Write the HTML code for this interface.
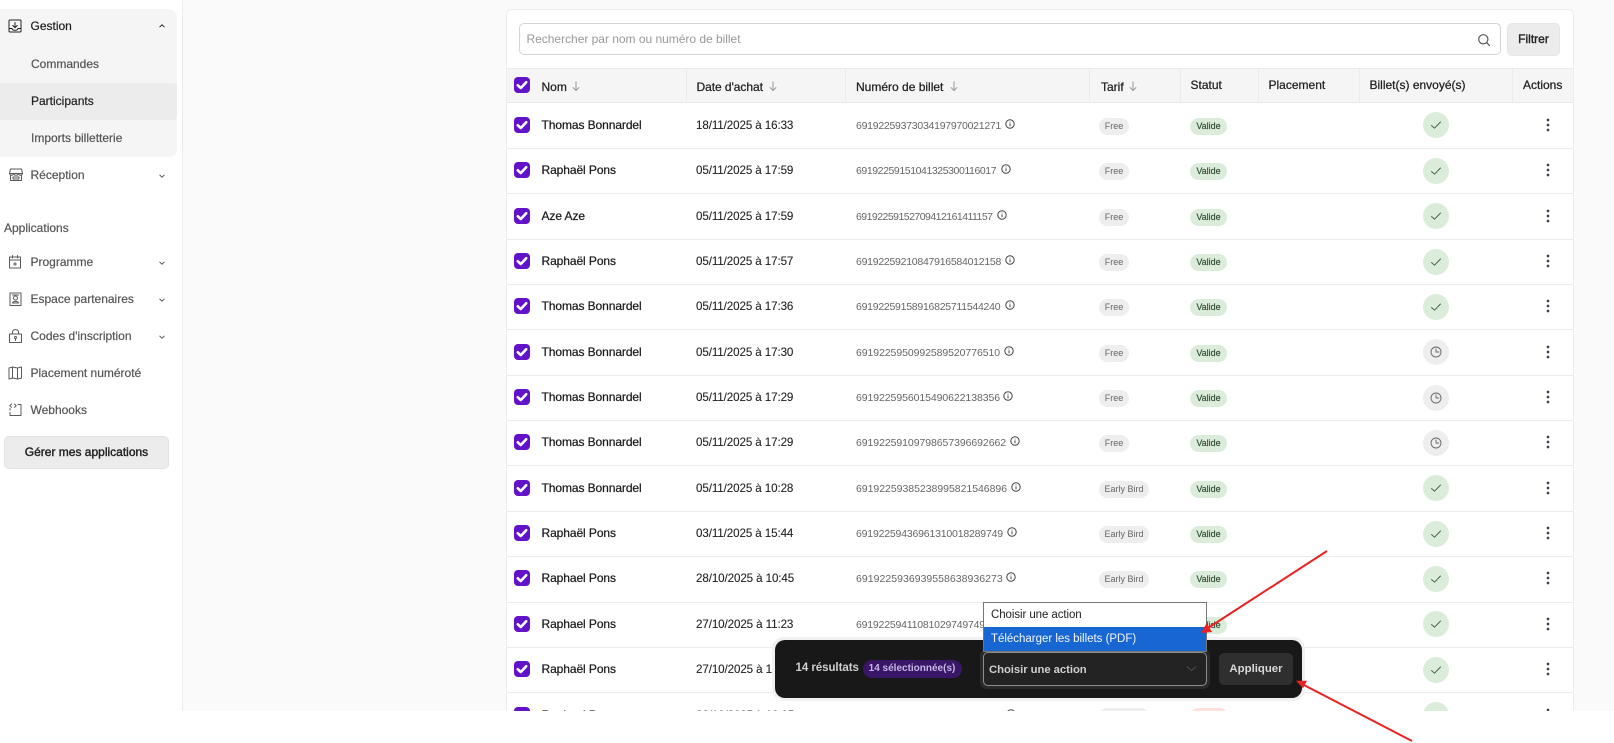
<!DOCTYPE html>
<html lang="fr"><head><meta charset="utf-8"><title>Participants</title>
<style>
*{box-sizing:border-box}
html,body{margin:0;padding:0;background:#fff}
body{width:1614px;height:743px;position:relative;overflow:hidden;font-family:"Liberation Sans",sans-serif;font-size:12px;color:#1c1c1c}
.a{position:absolute;white-space:nowrap}
#app{position:absolute;left:0;top:0;width:1614px;height:711px;overflow:hidden;background:#fafafa}
#side{position:absolute;left:0;top:0;width:183px;height:711px;background:#fff;border-right:1px solid #ececec}
.s{position:absolute;white-space:nowrap;line-height:16px;height:16px;color:#555;font-size:12px;-webkit-text-stroke:.2px currentColor}
.ic{position:absolute;width:16px;height:16px;fill:none;stroke:#5a5a5a;stroke-width:1;stroke-linecap:round;stroke-linejoin:round}
.ch{position:absolute;left:158px;width:8px;height:6px;fill:none;stroke:#555;stroke-width:1}
#card{position:absolute;left:506px;top:9px;width:1068px;height:760px;background:#fff;border:1px solid #ececec;border-radius:6px}
.h{position:absolute;top:0;height:34px;line-height:34px;white-space:nowrap;font-size:12px;color:#222;-webkit-text-stroke:.25px #222}
.v{position:absolute;top:0;width:1px;height:34px;background:#ebebeb}
.ar{position:absolute;width:10px;height:12px;fill:none;stroke:#999;stroke-width:1;top:11px}
.r{position:absolute;left:507px;width:1066px;height:45.35px;background:#fff;border-bottom:1px solid #ebebeb}
.cb{position:absolute;left:7px;top:13.3px;width:16px;height:16px;border-radius:4px;background:#6213c9}
.cb svg{position:absolute;left:0;top:0;width:16px;height:16px}
.n,.d,.t{position:absolute;white-space:nowrap;top:13.3px;height:17px;line-height:17px}
.n{left:34.5px;font-size:12px;color:#1c1c1c;-webkit-text-stroke:.25px #1c1c1c;letter-spacing:-.08px}
.d{left:189px;font-size:11.6px;color:#222;letter-spacing:-.1px;-webkit-text-stroke:.1px #222}
.t{left:349px;top:14.3px;font-size:10.5px;color:#666}
.inf{position:absolute;top:15.3px;width:10px;height:10px;fill:none;stroke:#444;stroke-width:1}
.p{position:absolute;top:14.3px;height:17px;line-height:17px;border-radius:9px;font-size:9px;text-align:center;white-space:nowrap}
.f{left:592px;width:30px;background:#eee;color:#666}
.e{left:592px;width:50px;background:#eee;color:#666}
.o{left:683px;width:37px;background:#dcecdb;color:#2d4a32;-webkit-text-stroke:.15px #2d4a32}
.x{left:683px;width:38px;background:#ffe0dc;color:#7a2a20}
.c{position:absolute;left:916px;top:8.8px;width:26px;height:26px;border-radius:50%}
.c svg{position:absolute;left:5px;top:5px;width:16px;height:16px;fill:none;stroke-width:.9;stroke-linecap:round;stroke-linejoin:round}
.cg{background:#dcecdb}.cg svg{stroke:#3f5a45}
.cc{background:#eee}.cc svg{stroke:#666}
.m{position:absolute;left:1039px;top:14.3px;width:4px;height:14px}
.m svg{display:block;width:4px;height:14px;fill:#3c4450}
</style></head><body>
<svg width="0" height="0" style="position:absolute">
<symbol id="k" viewBox="0 0 16 16"><path d="M3.8 8.3 6.8 11 12.2 5.2" fill="none" stroke="#fff" stroke-width="2.6" stroke-linecap="round" stroke-linejoin="round"/></symbol>
<symbol id="i" viewBox="0 0 10 10"><circle cx="5" cy="5" r="4.2"/><path d="M5 4.4V7.2M5 2.6V3.4"/></symbol>
<symbol id="g" viewBox="0 0 16 16"><path d="M3.5 8.5 6.5 11.2 12.5 5"/></symbol>
<symbol id="o" viewBox="0 0 16 16"><circle cx="8" cy="8" r="5"/><path d="M8 5V8H10.8"/></symbol>
<symbol id="d" viewBox="0 0 4 14"><circle cx="2" cy="2" r="1.35"/><circle cx="2" cy="7" r="1.35"/><circle cx="2" cy="12" r="1.35"/></symbol>
<symbol id="a" viewBox="0 0 10 12"><path d="M5 1.5V10.5M1.8 7.3 5 10.5 8.2 7.3"/></symbol>
</svg>
<div id="app">
<div id="side">
<div style="position:absolute;left:0;top:9px;width:177px;height:148px;background:#f5f5f5;border-radius:0 8px 8px 0"></div>
<div style="position:absolute;left:0;top:83px;width:177px;height:37px;background:#ececec;border-radius:0 4px 4px 0"></div>
<svg class="ic" style="left:7px;top:18px;stroke:#222" viewBox="0 0 16 16"><rect x="2" y="2" width="12" height="12" rx="1"/><path d="M8 4.5V9.5M5.8 7.5 8 9.7 10.2 7.5M2 10.5H5C5.4 12 6.6 12.3 8 12.3S10.6 12 11 10.5H14"/></svg>
<div class="s" style="left:30.5px;top:18px;color:#222">Gestion</div>
<svg class="ch" style="top:23px;stroke:#222" viewBox="0 0 8 6"><path d="M1.5 4.2 4 1.8 6.5 4.2"/></svg>
<div class="s" style="left:31px;top:56px">Commandes</div>
<div class="s" style="left:31px;top:93px;color:#222">Participants</div>
<div class="s" style="left:31px;top:130px">Imports billetterie</div>
<svg class="ic" style="left:8px;top:167px" viewBox="0 0 16 16"><path d="M2.5 2H13.5L14.5 6.5H1.5ZM2.5 8V13.5H13.5V8M1.5 6.5C2 8.8 5 8.8 5.5 6.5 6 8.8 10 8.8 10.5 6.5 11 8.8 14 8.8 14.5 6.5"/><rect x="5" y="10" width="6" height="2"/></svg>
<div class="s" style="left:30.5px;top:167px">Réception</div>
<svg class="ch" style="top:173px" viewBox="0 0 8 6"><path d="M1.5 1.8 4 4.2 6.5 1.8"/></svg>
<div class="s" style="left:4px;top:220px">Applications</div>
<svg class="ic" style="left:7px;top:254px" viewBox="0 0 16 16"><rect x="2.5" y="3" width="11" height="11"/><path d="M2.5 6H13.5M5.5 1.5V4M10.5 1.5V4M6.5 10H9.5M8 8.5V11.5"/></svg>
<div class="s" style="left:30.5px;top:254px">Programme</div>
<svg class="ch" style="top:260px" viewBox="0 0 8 6"><path d="M1.5 1.8 4 4.2 6.5 1.8"/></svg>
<svg class="ic" style="left:7px;top:291px" viewBox="0 0 16 16"><rect x="3" y="2" width="11" height="12.5"/><circle cx="8.5" cy="7" r="2"/><path d="M5.5 12C6 9.8 11 9.8 11.5 12ZM5.5 4H11.5"/></svg>
<div class="s" style="left:30.5px;top:291px">Espace partenaires</div>
<svg class="ch" style="top:297px" viewBox="0 0 8 6"><path d="M1.5 1.8 4 4.2 6.5 1.8"/></svg>
<svg class="ic" style="left:7px;top:328px" viewBox="0 0 16 16"><rect x="2.5" y="6" width="12" height="8.5"/><path d="M5.5 6V4C5.5 .8 11.5 .8 11.5 4V6"/><circle cx="8.5" cy="9.5" r="1"/><path d="M8.5 10.5V12.5"/></svg>
<div class="s" style="left:30.5px;top:328px">Codes d'inscription</div>
<svg class="ch" style="top:334px" viewBox="0 0 8 6"><path d="M1.5 1.8 4 4.2 6.5 1.8"/></svg>
<svg class="ic" style="left:7px;top:365px" viewBox="0 0 16 16"><path d="M2 3 5.5 2 10.5 3 14.5 2V13L10.5 14 5.5 13 2 14ZM5.5 2V13M10.5 3V14"/></svg>
<div class="s" style="left:30.5px;top:365px">Placement numéroté</div>
<svg class="ic" style="left:7px;top:402px" viewBox="0 0 16 16"><path d="M11 2.5H14V13.5H3V10.5M3 6.5V8M4.5 2 2.8 3.7 4.5 5.4M7.5 2 9.2 3.7 7.5 5.4"/></svg>
<div class="s" style="left:30.5px;top:402px">Webhooks</div>
<div style="position:absolute;left:4px;top:436px;width:165px;height:33px;background:#ececec;border:1px solid #e2e2e2;border-radius:5px;text-align:center;line-height:31px;font-size:12px;color:#222;-webkit-text-stroke:.4px #222">Gérer mes applications</div>
</div>

<div id="card"></div>
<div class="a" style="left:519px;top:23px;width:982px;height:32px;border:1.5px solid #d4d4d4;border-radius:5px;background:#fff"></div>
<div class="a" style="left:526.5px;top:31px;line-height:17px;color:#999;font-size:12px;letter-spacing:-.02px">Rechercher par nom ou numéro de billet</div>
<svg class="a" style="left:1477px;top:33px;fill:none;stroke:#555;stroke-width:1.2;stroke-linecap:round" width="14" height="14" viewBox="0 0 14 14"><circle cx="6.3" cy="6.3" r="4.6"/><path d="M9.8 9.8 12.5 12.5"/></svg>
<div class="a" style="left:1507px;top:23px;width:53px;height:33px;background:#ececec;border:1px solid #e6e6e6;border-radius:5px;text-align:center;line-height:31px;font-size:12px;color:#222;-webkit-text-stroke:.4px #222">Filtrer</div>

<div class="a" style="left:507px;top:68px;width:1066px;height:35px;background:#f5f5f5;border-top:1px solid #ececec;border-bottom:1px solid #e8e8e8">
<div class="cb" style="top:8px"><svg><use href="#k"/></svg></div>
<div class="h" style="left:34.5px;top:1px">Nom</div><svg class="ar" style="left:63.5px"><use href="#a"/></svg>
<div class="v" style="left:179px"></div>
<div class="h" style="left:189.5px;top:1px;letter-spacing:-.05px">Date d'achat</div><svg class="ar" style="left:261px"><use href="#a"/></svg>
<div class="v" style="left:338px"></div>
<div class="h" style="left:349px;top:1px">Numéro de billet</div><svg class="ar" style="left:441.5px"><use href="#a"/></svg>
<div class="v" style="left:582px"></div>
<div class="h" style="left:594px;top:1px">Tarif</div><svg class="ar" style="left:621px"><use href="#a"/></svg>
<div class="v" style="left:673px"></div>
<div class="h" style="left:683.5px;top:-1px">Statut</div>
<div class="v" style="left:751px"></div>
<div class="h" style="left:761.5px;top:-1px">Placement</div>
<div class="v" style="left:852px"></div>
<div class="h" style="left:862.5px;top:-1px">Billet(s) envoyé(s)</div>
<div class="v" style="left:1005px"></div>
<div class="h" style="left:1016px;top:-1px">Actions</div>
</div>

<div class="r" style="top:103.7px"><div class="cb"><svg><use href="#k"/></svg></div><span class="n">Thomas Bonnardel</span><span class="d">18/11/2025 à 16:33</span><span class="t" style="letter-spacing:-.26px">69192259373034197970021271</span><svg class="inf" style="left:498px"><use href="#i"/></svg><span class="p f">Free</span><span class="p o">Valide</span><span class="c cg"><svg><use href="#g"/></svg></span><span class="m"><svg><use href="#d"/></svg></span></div>
<div class="r" style="top:149.05px"><div class="cb"><svg><use href="#k"/></svg></div><span class="n">Raphaël Pons</span><span class="d">05/11/2025 à 17:59</span><span class="t" style="letter-spacing:-.42px">69192259151041325300116017</span><svg class="inf" style="left:494px"><use href="#i"/></svg><span class="p f">Free</span><span class="p o">Valide</span><span class="c cg"><svg><use href="#g"/></svg></span><span class="m"><svg><use href="#d"/></svg></span></div>
<div class="r" style="top:194.4px"><div class="cb"><svg><use href="#k"/></svg></div><span class="n">Aze Aze</span><span class="d">05/11/2025 à 17:59</span><span class="t" style="letter-spacing:-.53px">69192259152709412161411157</span><svg class="inf" style="left:490px"><use href="#i"/></svg><span class="p f">Free</span><span class="p o">Valide</span><span class="c cg"><svg><use href="#g"/></svg></span><span class="m"><svg><use href="#d"/></svg></span></div>
<div class="r" style="top:239.75px"><div class="cb"><svg><use href="#k"/></svg></div><span class="n">Raphaël Pons</span><span class="d">05/11/2025 à 17:57</span><span class="t" style="letter-spacing:-.26px">69192259210847916584012158</span><svg class="inf" style="left:498px"><use href="#i"/></svg><span class="p f">Free</span><span class="p o">Valide</span><span class="c cg"><svg><use href="#g"/></svg></span><span class="m"><svg><use href="#d"/></svg></span></div>
<div class="r" style="top:285.1px"><div class="cb"><svg><use href="#k"/></svg></div><span class="n">Thomas Bonnardel</span><span class="d">05/11/2025 à 17:36</span><span class="t" style="letter-spacing:-.26px">69192259158916825711544240</span><svg class="inf" style="left:498px"><use href="#i"/></svg><span class="p f">Free</span><span class="p o">Valide</span><span class="c cg"><svg><use href="#g"/></svg></span><span class="m"><svg><use href="#d"/></svg></span></div>
<div class="r" style="top:330.45px"><div class="cb"><svg><use href="#k"/></svg></div><span class="n">Thomas Bonnardel</span><span class="d">05/11/2025 à 17:30</span><span class="t" style="letter-spacing:-.08px">6919225950992589520776510</span><svg class="inf" style="left:497px"><use href="#i"/></svg><span class="p f">Free</span><span class="p o">Valide</span><span class="c cc"><svg><use href="#o"/></svg></span><span class="m"><svg><use href="#d"/></svg></span></div>
<div class="r" style="top:375.8px"><div class="cb"><svg><use href="#k"/></svg></div><span class="n">Thomas Bonnardel</span><span class="d">05/11/2025 à 17:29</span><span class="t" style="letter-spacing:-.08px">6919225956015490622138356</span><svg class="inf" style="left:496px"><use href="#i"/></svg><span class="p f">Free</span><span class="p o">Valide</span><span class="c cc"><svg><use href="#o"/></svg></span><span class="m"><svg><use href="#d"/></svg></span></div>
<div class="r" style="top:421.15px"><div class="cb"><svg><use href="#k"/></svg></div><span class="n">Thomas Bonnardel</span><span class="d">05/11/2025 à 17:29</span><span class="t" style="letter-spacing:-.07px">69192259109798657396692662</span><svg class="inf" style="left:503px"><use href="#i"/></svg><span class="p f">Free</span><span class="p o">Valide</span><span class="c cc"><svg><use href="#o"/></svg></span><span class="m"><svg><use href="#d"/></svg></span></div>
<div class="r" style="top:466.5px"><div class="cb"><svg><use href="#k"/></svg></div><span class="n">Thomas Bonnardel</span><span class="d">05/11/2025 à 10:28</span><span class="t" style="letter-spacing:-.03px">69192259385238995821546896</span><svg class="inf" style="left:504px"><use href="#i"/></svg><span class="p e">Early Bird</span><span class="p o">Valide</span><span class="c cg"><svg><use href="#g"/></svg></span><span class="m"><svg><use href="#d"/></svg></span></div>
<div class="r" style="top:511.85px"><div class="cb"><svg><use href="#k"/></svg></div><span class="n">Raphaël Pons</span><span class="d">03/11/2025 à 15:44</span><span class="t" style="letter-spacing:-.19px">69192259436961310018289749</span><svg class="inf" style="left:500px"><use href="#i"/></svg><span class="p e">Early Bird</span><span class="p o">Valide</span><span class="c cg"><svg><use href="#g"/></svg></span><span class="m"><svg><use href="#d"/></svg></span></div>
<div class="r" style="top:557.2px"><div class="cb"><svg><use href="#k"/></svg></div><span class="n">Raphael Pons</span><span class="d">28/10/2025 à 10:45</span><span class="t" style="letter-spacing:.03px">6919225936939558638936273</span><svg class="inf" style="left:499px"><use href="#i"/></svg><span class="p e">Early Bird</span><span class="p o">Valide</span><span class="c cg"><svg><use href="#g"/></svg></span><span class="m"><svg><use href="#d"/></svg></span></div>
<div class="r" style="top:602.55px"><div class="cb"><svg><use href="#k"/></svg></div><span class="n">Raphael Pons</span><span class="d">27/10/2025 à 11:23</span><span class="t" style="letter-spacing:-.2px">69192259411081029749749120</span><span class="p e">Early Bird</span><span class="p o">Valide</span><span class="c cg"><svg><use href="#g"/></svg></span><span class="m"><svg><use href="#d"/></svg></span></div>
<div class="r" style="top:647.9px"><div class="cb"><svg><use href="#k"/></svg></div><span class="n">Raphaël Pons</span><span class="d">27/10/2025 à 11:23</span><span class="t" style="letter-spacing:-.2px">69192259411081029749749121</span><span class="p e">Early Bird</span><span class="p o">Valide</span><span class="c cg"><svg><use href="#g"/></svg></span><span class="m"><svg><use href="#d"/></svg></span></div>
<div class="r" style="top:693.25px"><div class="cb"><svg><use href="#k"/></svg></div><span class="n">Raphael Pons</span><span class="d">22/10/2025 à 10:05</span><span class="t" style="letter-spacing:-.2px">69192259411081029749749122</span><svg class="inf" style="left:499px"><use href="#i"/></svg><span class="p e">Early Bird</span><span class="p x">Annulé</span><span class="c cg"><svg><use href="#g"/></svg></span><span class="m"><svg><use href="#d"/></svg></span></div>
</div>

<div class="a" style="left:772px;top:637px;width:533px;height:64px;background:#f1f1f1;border-radius:12px"></div>
<div class="a" style="left:775px;top:640px;width:527px;height:58px;background:#181818;border-radius:10px"></div>
<div class="a" style="left:795.5px;top:660px;line-height:17px;font-size:11.5px;font-weight:bold;color:#cfcfcf;letter-spacing:-.05px">14 résultats</div>
<div class="a" style="left:862.5px;top:660px;width:99px;height:18px;background:#391668;border-radius:9px;text-align:center;line-height:18px;font-size:10px;font-weight:bold;color:#c8b6e6">14 sélectionnée(s)</div>
<div class="a" style="left:980px;top:649px;width:230px;height:40px;background:#2a2a2a;border-radius:7px"></div>
<div class="a" style="left:983px;top:652px;width:224px;height:34px;background:#232323;border:1.5px solid #8e8e8e;border-radius:5px"></div>
<div class="a" style="left:989px;top:662px;line-height:17px;font-size:11.3px;font-weight:bold;color:#cfcfcf;letter-spacing:-.05px">Choisir une action</div>
<svg class="a" style="left:1186px;top:665px;fill:none;stroke:#4e4e4e;stroke-width:1" width="11" height="7" viewBox="0 0 11 7"><path d="M1 1.5 5.5 5.5 10 1.5"/></svg>
<div class="a" style="left:1219px;top:653px;width:74px;height:32px;background:#2f2f2f;border-radius:5px;text-align:center;line-height:33px;font-size:11.4px;font-weight:bold;color:#d8d8d8">Appliquer</div>

<div class="a" style="left:983px;top:602px;width:224px;height:50px;background:#fff;border:1px solid #767676">
<div style="height:24px;line-height:25px;padding-left:7px;font-size:11.5px;color:#222;letter-spacing:-.08px">Choisir une action</div>
<div style="height:24px;line-height:24px;padding-left:7px;font-size:11.5px;color:#f2f6fc;background:#1866d2;letter-spacing:-.02px">Télécharger les billets (PDF)</div>
</div>

<svg class="a" style="left:0;top:0" width="1614" height="743" viewBox="0 0 1614 743">
<path d="M1327 551 1208 628" stroke="#e92222" stroke-width="2" fill="none"/>
<path d="M1201 633 1206.7 623 1212 632Z" fill="#e92222"/>
<path d="M1412 741 1302 684" stroke="#e92222" stroke-width="2" fill="none"/>
<path d="M1296 680.7 1307 680.7 1303 688.3Z" fill="#e92222"/>
</svg>
</body></html>
